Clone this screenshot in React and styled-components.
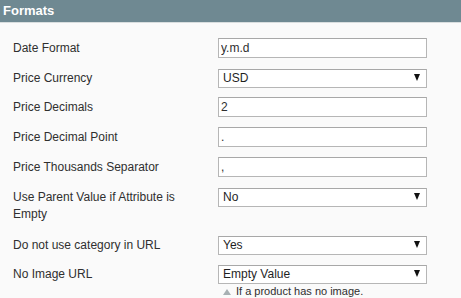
import React from 'react';
import styled, { createGlobalStyle } from 'styled-components';

const GlobalStyle = createGlobalStyle`
    html, body {
        margin: 0;
        padding: 0;
        background-color: #fafafa;
    }
    body {
        font-family: "Liberation Sans", Arial, sans-serif;
    }
`;

const Section = styled.section`
    width: 461px;
    min-height: 298px;
    background-color: #fafafa;
`;

const Header = styled.header`
    height: 22px;
    background-color: #6f8992;
    border-bottom: 1px solid #d9dedf;
    display: flex;
    align-items: center;
    padding-left: 3px;
`;

const Title = styled.h3`
    margin: 0;
    color: #fff;
    font-family: "Liberation Sans", Arial, sans-serif;
    font-size: 13px;
    font-weight: 700;
    line-height: 16px;
`;

const Form = styled.div`
    padding: 10px 0 0 13px;
`;

const Row = styled.div`
    display: grid;
    grid-template-columns: 205px 209px;
    align-items: start;
    padding: ${p => (p.$tall ? '5px 0 7px' : '5px 0')};
`;

const Label = styled.label`
    padding: 2px 20px 0 0;
    font-family: "Liberation Sans", Arial, sans-serif;
    font-size: 12px;
    line-height: 17px;
    color: #2f2f2f;
`;

const Field = styled.div`
    display: flex;
    flex-direction: column;
`;

const TextInput = styled.input`
    box-sizing: border-box;
    width: 209px;
    height: 20px;
    margin: 0;
    padding: 0 2px;
    border: 1px solid #b6b6b6;
    border-top-color: #a8a8a8;
    background: #fff;
    font-family: "Liberation Sans", Arial, sans-serif;
    font-size: 12px;
    color: #2f2f2f;
    outline: none;
`;

const SelectWrap = styled.div`
    position: relative;
    width: 209px;
    height: 19px;
`;

const Select = styled.select`
    appearance: none;
    box-sizing: border-box;
    width: 100%;
    height: 19px;
    margin: 0;
    padding: 0 20px 0 4px;
    border: 1px solid #b6b6b6;
    border-top-color: #a8a8a8;
    border-radius: 0;
    background: #fff;
    font-family: "Liberation Sans", Arial, sans-serif;
    font-size: 12px;
    color: #1f1f1f;
    outline: none;
`;

const Arrow = styled.span`
    position: absolute;
    right: 7px;
    top: 6px;
    width: 0;
    height: 0;
    border-left: 3.5px solid transparent;
    border-right: 3.5px solid transparent;
    border-top: 7px solid #111;
    pointer-events: none;
`;

const Note = styled.p`
    margin: 2px 0 0;
    padding-left: 5px;
    display: flex;
    align-items: center;
    gap: 5px;
    font-family: "Liberation Sans", Arial, sans-serif;
    font-size: 11px;
    line-height: 13px;
    color: #2f2f2f;
`;

const NoteArrow = styled.span`
    width: 0;
    height: 0;
    border-left: 4px solid transparent;
    border-right: 4px solid transparent;
    border-bottom: 6px solid #a8b0b3;
`;

const rows = [
    { label: 'Date Format', type: 'text', value: 'y.m.d' },
    { label: 'Price Currency', type: 'select', value: 'USD' },
    { label: 'Price Decimals', type: 'text', value: '2' },
    { label: 'Price Decimal Point', type: 'text', value: '.' },
    { label: 'Price Thousands Separator', type: 'text', value: ',' },
    { label: 'Use Parent Value if Attribute is Empty', type: 'select', value: 'No', tall: true },
    { label: 'Do not use category in URL', type: 'select', value: 'Yes' },
    { label: 'No Image URL', type: 'select', value: 'Empty Value', note: 'If a product has no image.' },
];

function Control({ row }) {
    if (row.type === 'text') {
        return <TextInput type="text" defaultValue={row.value} />;
    }
    return (
        <SelectWrap>
            <Select defaultValue={row.value}>
                <option>{row.value}</option>
            </Select>
            <Arrow />
        </SelectWrap>
    );
}

export default function App() {
    return (
        <Section>
            <GlobalStyle />
            <Header>
                <Title>Formats</Title>
            </Header>
            <Form>
                {rows.map(row => (
                    <Row key={row.label} $tall={row.tall}>
                        <Label>{row.label}</Label>
                        <Field>
                            <Control row={row} />
                            {row.note && (
                                <Note>
                                    <NoteArrow />
                                    {row.note}
                                </Note>
                            )}
                        </Field>
                    </Row>
                ))}
            </Form>
        </Section>
    );
}
